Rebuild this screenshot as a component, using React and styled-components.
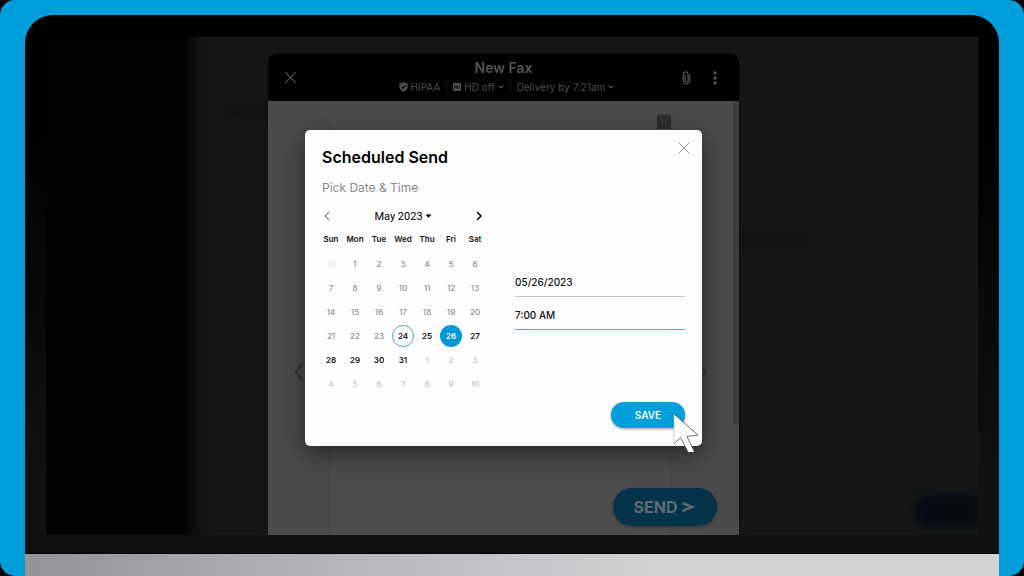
import React from "react";
import styled, { createGlobalStyle, css } from "styled-components";

const GlobalStyle = createGlobalStyle`
  *, *::before, *::after { box-sizing: border-box; }
  body { margin: 0; background: #000; font-family: Inter, "Open Sans", sans-serif; }
  button, input { font: inherit; color: inherit; }
  button { padding: 0; border: 0; background: none; cursor: pointer; }
  svg { display: block; flex: none; }
`;

const Backdrop = styled.div`
  min-height: 100vh;
  display: flex;
  flex-direction: column;
  padding: 15px 25px 0;
  border-radius: 15px;
  background: #009fdc;
`;

const Bezel = styled.div`
  flex: 1;
  display: flex;
  padding: 22px 21px 18px;
  border-bottom: 1px solid #000;
  border-radius: 28px 28px 0 0;
  background: linear-gradient(#000 20%, #111 85%);
`;

const Stand = styled.div`
  height: 22px;
  background: linear-gradient(90deg, #939297, #b6b7bc 33%, #d2d3d4 66%, #d2d3d4);
`;

const Screen = styled.div`
  flex: 1;
  position: relative;
  overflow: hidden;
  display: grid;
  grid-template-columns: 222fr minmax(auto, 471px) 239fr;
  padding-top: 17px;
  background: linear-gradient(90deg, #010202 138px, #131413 156px, #161716 170px);
`;

const Haze = styled.div`
  position: absolute;
  filter: blur(5px);
  background: #121312;
`;

const MenuHaze = styled(Haze)`
  left: 176px;
  top: 68px;
  width: 46px;
  height: 12px;
`;

const LabelHaze = styled(Haze)`
  right: 170px;
  top: 197px;
  width: 70px;
  height: 12px;
`;

const ActionHaze = styled(Haze)`
  right: -6px;
  bottom: 8px;
  width: 68px;
  height: 34px;
  border-radius: 12px;
  background: #060c14;
`;

const FaxWindow = styled.main`
  grid-column: 2;
  position: relative;
  display: flex;
  flex-direction: column;
  min-height: 420px;
  border-radius: 7px 7px 0 0;
  background: #4a4b4a;
  box-shadow: 0 0 8px rgba(0, 0, 0, 0.3);
`;

const FaxHeader = styled.header`
  display: grid;
  grid-template-columns: 1fr auto 1fr;
  align-items: center;
  height: 47px;
  padding: 0 16px;
  border-radius: 7px 7px 0 0;
  background: #000;
  color: #535554;
`;

const HeaderCenter = styled.div`
  display: flex;
  flex-direction: column;
  align-items: center;
`;

const FaxTitle = styled.h1`
  margin: 0;
  font-size: 14px;
  line-height: 18px;
  font-weight: 600;
`;

const StatusRow = styled.div`
  display: flex;
  align-items: center;
  gap: 6px;
  padding-left: 6px;
  font-size: 10px;
  line-height: 20px;
  color: #4c4e4d;
`;

const StatusItem = styled.button`
  display: flex;
  align-items: center;
  gap: 3px;
`;

const Divider = styled.span`
  width: 1px;
  height: 8px;
  background: #1c1c1c;
`;

const HeaderTools = styled.div`
  display: flex;
  justify-content: flex-end;
  gap: 18px;
`;

const FaxBody = styled.section`
  flex: 1;
  display: flex;
  justify-content: center;
  padding: 14px 6px 0 0;
  position: relative;
`;

const Paper = styled.div`
  width: 341px;
  display: flex;
  justify-content: flex-end;
  align-items: flex-start;
  background: #4b4c4b;
  box-shadow: 0 0 2px #404140;
`;

const RemovePage = styled.button`
  display: grid;
  place-items: center;
  width: 14px;
  height: 14px;
  background: #2b2c2b;
  color: #4a4a4a;
`;

const ScrollThumb = styled.div`
  position: absolute;
  top: 0;
  right: 0;
  width: 6px;
  height: 323px;
  background: #3d3e3d;
`;

const PageArrow = styled.button`
  position: absolute;
  top: 260px;
  ${(p) => (p.$side === "left" ? "left: 26px;" : "right: 31px;")}
  color: #313231;
`;

const SendButton = styled.button`
  position: absolute;
  right: 22px;
  bottom: 9px;
  display: flex;
  align-items: center;
  justify-content: center;
  gap: 5px;
  width: 104px;
  height: 38px;
  border-radius: 19px;
  background: #05334a;
  color: #5d6b71;
  font-size: 16px;
  font-weight: 700;
  box-shadow: 0 1px 3px rgba(0, 0, 0, 0.3);
`;

const Overlay = styled.div`
  position: absolute;
  inset: 0;
  padding: 76px 37px 0;
`;

const Dialog = styled.div`
  position: relative;
  padding: 16px 17px 18px 14px;
  border-radius: 5px;
  background: #fefefe;
  color: #111;
  box-shadow: 0 8px 26px rgba(0, 0, 0, 0.5);
`;

const DialogTitle = styled.h2`
  margin: 0;
  padding-left: 3px;
  font-size: 16px;
  line-height: 22px;
  font-weight: 600;
  color: #000;
`;

const DialogHint = styled.p`
  margin: 10px 0 8px;
  padding-left: 3px;
  font-size: 12px;
  line-height: 20px;
  color: #8b8b8b;
`;

const CloseDialog = styled.button`
  position: absolute;
  top: 12px;
  right: 12px;
  color: #8e8e8e;
`;

const DialogBody = styled.div`
  display: flex;
  align-items: center;
  gap: 28px;
`;

const MonthBar = styled.div`
  display: flex;
  align-items: center;
  justify-content: space-between;
  height: 20px;
  padding: 0 5px;
`;

const StepButton = styled.button`
  color: ${(p) => (p.$muted ? "#8a8a8a" : "#000")};
`;

const MonthButton = styled.button`
  display: flex;
  align-items: center;
  gap: 2px;
  font-family: Roboto, sans-serif;
  font-size: 11px;
  color: #000;
`;

const Days = styled.table`
  width: 168px;
  table-layout: fixed;
  border-collapse: collapse;
  text-align: center;
  font-size: 8px;
  line-height: 12px;

  th {
    height: 26px;
    padding: 0;
    font-weight: 600;
    color: #111;
  }

  td {
    height: 24px;
    padding: 0;
  }
`;

const tones = {
  past: css`color: #909090;`,
  open: css`color: #111; font-weight: 600;`,
  other: css`color: #c4c4c4;`,
  faint: css`color: #e2e2e2;`,
  today: css`color: #111; font-weight: 600; border: 1px solid #45abd8;`,
  picked: css`color: #fff; font-weight: 600; background: #0099d8;`,
};

const Day = styled.button`
  display: block;
  width: 22px;
  height: 22px;
  margin: 1px auto;
  border-radius: 50%;
  font-weight: 500;
  ${(p) => tones[p.$tone]}
`;

const Fields = styled.div`
  flex: 1;
  display: flex;
  flex-direction: column;
  gap: 5px;
  min-width: 0;
  padding-bottom: 4px;
`;

const Field = styled.input`
  width: 100%;
  height: 28px;
  padding: 0;
  border: 0;
  border-bottom: 1px solid ${(p) => (p.$active ? "#4fb3dd" : "#c4c4c4")};
  outline: 0;
  background: none;
  font-size: 10px;
  font-weight: 500;
`;

const DialogFooter = styled.footer`
  display: flex;
  justify-content: flex-end;
  margin-top: 6px;
`;

const SaveButton = styled.button`
  width: 74px;
  height: 26px;
  border-radius: 13px;
  background: #009fdc;
  color: #fff;
  font-size: 10px;
  font-weight: 600;
  box-shadow: 0 1px 3px rgba(0, 0, 0, 0.4);
`;

const Pointer = styled.svg`
  position: absolute;
  right: 3px;
  bottom: -7px;
  pointer-events: none;
`;

const MenuButton = styled.button`
  padding: 0 6px 0 4px;
`;

const Cross = ({ size, stroke = 1 }) => (
  <svg width={size} height={size} viewBox="0 0 12 12" fill="none" stroke="currentColor" strokeWidth={stroke}>
    <path d="M1 1l10 10M11 1L1 11" />
  </svg>
);

const Chevron = ({ left, width = 6, height = 10, stroke = 1 }) => (
  <svg width={width} height={height} viewBox="0 0 6 10" fill="none" stroke="currentColor" strokeWidth={stroke} preserveAspectRatio="none">
    <path d={left ? "M5 1L1 5l4 4" : "M1 1l4 4-4 4"} />
  </svg>
);

const Down = () => (
  <svg width="6" height="4" viewBox="0 0 6 4" fill="none" stroke="currentColor" strokeWidth="1.2">
    <path d="M.7.7L3 3 5.3.7" />
  </svg>
);

const Shield = () => (
  <svg width="9" height="10" viewBox="0 0 9 10">
    <path d="M4.5 0L8.7 1.6v3C8.7 7 7 9 4.5 9.8 2 9 .3 7 .3 4.6v-3z" fill="currentColor" />
    <path d="M2.5 4.8L4 6.3 6.7 3.4" fill="none" stroke="#000" strokeWidth="1.1" />
  </svg>
);

const HdBadge = () => (
  <svg width="8" height="8" viewBox="0 0 8 8">
    <rect width="8" height="8" rx="1" fill="currentColor" />
    <path d="M1.7 2.5v3M3.4 2.5v3M1.7 4h1.7M4.8 2.7v2.6h.6l.9-.7V3.4l-.9-.7z" fill="none" stroke="#000" strokeWidth=".7" />
  </svg>
);

const Clip = () => (
  <svg width="9" height="14" viewBox="0 0 9 14" fill="none" stroke="currentColor" strokeWidth="1.1">
    <path d="M7.7 3.5v6.2a3.2 3.2 0 0 1-6.4 0V3.3a2.4 2.4 0 0 1 4.8 0v6.2a1.5 1.5 0 0 1-3 0V3.8" />
  </svg>
);

const Dots = () => (
  <svg width="4" height="14" viewBox="0 0 4 14" fill="currentColor">
    <circle cx="2" cy="2" r="1.7" />
    <circle cx="2" cy="7" r="1.7" />
    <circle cx="2" cy="12" r="1.7" />
  </svg>
);

const Plane = () => (
  <svg width="14" height="12" viewBox="0 0 14 12" fill="currentColor">
    <path d="M.5.7L13.5 6 .5 11.3V8.2L7 6 .5 3.8z" />
  </svg>
);

const weekdays = ["Sun", "Mon", "Tue", "Wed", "Thu", "Fri", "Sat"];

const toneOf = (index, day) => {
  if (index === 0) return "faint";
  if (index > 31) return "other";
  if (day === 24) return "today";
  if (day === 26) return "picked";
  return day < 24 ? "past" : "open";
};

const weeks = Array.from({ length: 6 }, (_, w) =>
  Array.from({ length: 7 }, (_, d) => {
    const index = w * 7 + d;
    const day = index === 0 ? 30 : index > 31 ? index - 31 : index;
    return { index, day, tone: toneOf(index, day) };
  })
);

const Calendar = () => (
  <div>
    <MonthBar>
      <StepButton $muted aria-label="Previous month"><Chevron left stroke={1.2} /></StepButton>
      <MonthButton>
        May 2023
        <svg width="7" height="4" viewBox="0 0 7 4" fill="currentColor"><path d="M.5.5h6L3.5 3.8z" /></svg>
      </MonthButton>
      <StepButton aria-label="Next month"><Chevron stroke={1.5} /></StepButton>
    </MonthBar>
    <Days>
      <thead>
        <tr>{weekdays.map((name) => <th key={name} scope="col">{name}</th>)}</tr>
      </thead>
      <tbody>
        {weeks.map((week) => (
          <tr key={week[0].index}>
            {week.map(({ index, day, tone }) => (
              <td key={index}><Day $tone={tone}>{day}</Day></td>
            ))}
          </tr>
        ))}
      </tbody>
    </Days>
  </div>
);

const ScheduleDialog = () => (
  <Dialog role="dialog" aria-labelledby="schedule-title">
    <DialogTitle id="schedule-title">Scheduled Send</DialogTitle>
    <CloseDialog aria-label="Close dialog"><Cross size={12} /></CloseDialog>
    <DialogHint>Pick Date &amp; Time</DialogHint>
    <DialogBody>
      <Calendar />
      <Fields>
        <Field aria-label="Date" defaultValue="05/26/2023" />
        <Field aria-label="Time" defaultValue="7:00 AM" $active />
      </Fields>
    </DialogBody>
    <DialogFooter>
      <SaveButton>SAVE</SaveButton>
    </DialogFooter>
    <Pointer width="26" height="40" viewBox="0 0 26 40">
      <path d="M1 1L25 22 14 23.5 21.5 39H15L7.5 24.5 1 31z" fill="#fff" />
      <path d="M1 1L25 22 14 23.5 21.5 39M15 39L7.5 24.5 1 31" fill="none" stroke="#333" strokeWidth=".7" />
      <path d="M1 1v30" stroke="#aaa" strokeWidth=".5" />
    </Pointer>
  </Dialog>
);

export default function App() {
  return (
    <>
      <GlobalStyle />
      <Backdrop>
        <Bezel>
          <Screen>
            <MenuHaze />
            <LabelHaze />
            <ActionHaze />
            <FaxWindow>
              <FaxHeader>
                <div>
                  <button aria-label="Close fax"><Cross size={13} /></button>
                </div>
                <HeaderCenter>
                  <FaxTitle>New Fax</FaxTitle>
                  <StatusRow>
                    <StatusItem><Shield />HIPAA</StatusItem>
                    <Divider />
                    <StatusItem><HdBadge />HD off<Down /></StatusItem>
                    <Divider />
                    <StatusItem>Delivery by 7:21am<Down /></StatusItem>
                  </StatusRow>
                </HeaderCenter>
                <HeaderTools>
                  <button aria-label="Attach file"><Clip /></button>
                  <MenuButton aria-label="More options"><Dots /></MenuButton>
                </HeaderTools>
              </FaxHeader>
              <FaxBody>
                <Paper>
                  <RemovePage aria-label="Remove page"><Cross size={6} stroke={1.5} /></RemovePage>
                </Paper>
                <ScrollThumb />
                <PageArrow $side="left" aria-label="Previous page"><Chevron left width={11} height={22} /></PageArrow>
                <PageArrow $side="right" aria-label="Next page"><Chevron width={11} height={22} /></PageArrow>
                <SendButton>SEND<Plane /></SendButton>
              </FaxBody>
              <Overlay>
                <ScheduleDialog />
              </Overlay>
            </FaxWindow>
          </Screen>
        </Bezel>
        <Stand />
      </Backdrop>
    </>
  );
}
